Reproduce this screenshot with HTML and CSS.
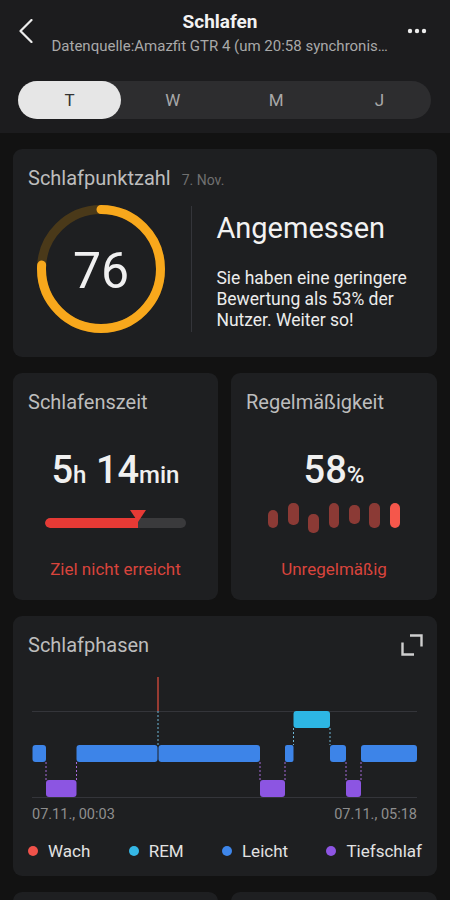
FILE: index.html
```html
<!DOCTYPE html>
<html lang="de">
<head>
    <meta charset="UTF-8">
    <meta name="viewport" content="width=device-width, initial-scale=1.0">
    <title>Schlafen</title>
    <link rel="stylesheet" href="styles.css">
</head>
<body>
    <header class="top">
        <div class="nav">
            <span class="back">
                <svg width="14" height="24" viewBox="0 0 14 24">
                    <polyline points="12.5,1 1.5,12 12.5,23" fill="none" stroke="#ededed" stroke-width="2.2" stroke-linecap="round" stroke-linejoin="round"/>
                </svg>
            </span>
            <div class="titles">
                <h1>Schlafen</h1>
                <p class="source">Datenquelle:Amazfit GTR 4 (um 20:58 synchronisiert)</p>
            </div>
            <span class="more">
                <svg width="20" height="6" viewBox="0 0 20 6">
                    <circle cx="3" cy="3" r="2.2" fill="#ededed"/>
                    <circle cx="10" cy="3" r="2.2" fill="#ededed"/>
                    <circle cx="17" cy="3" r="2.2" fill="#ededed"/>
                </svg>
            </span>
        </div>
        <div class="tabs">
            <span class="tab active">T</span>
            <span class="tab">W</span>
            <span class="tab">M</span>
            <span class="tab">J</span>
        </div>
    </header>

    <main class="content">
        <section class="card score">
            <div class="card-title">Schlafpunktzahl <span class="date">7. Nov.</span></div>
            <div class="score-body">
                <div class="ring">
                    <svg width="128" height="128" viewBox="0 0 128 128">
                        <circle cx="64" cy="64" r="59.5" fill="none" stroke="#4a3919" stroke-width="9"/>
                        <circle cx="64" cy="64" r="59.5" fill="none" stroke="#f8a81c" stroke-width="9"
                            stroke-linecap="round" stroke-dasharray="284 400" transform="rotate(-90 64 64)"/>
                    </svg>
                    <span class="ring-value">76</span>
                </div>
                <div class="divider"></div>
                <div class="score-text">
                    <div class="verdict">Angemessen</div>
                    <p class="desc">Sie haben eine geringere Bewertung als 53% der Nutzer. Weiter so!</p>
                </div>
            </div>
        </section>

        <div class="pair">
            <section class="card small">
                <div class="card-title">Schlafenszeit</div>
                <div class="big-value">5<small>h</small> 14<small>min</small></div>
                <div class="goal">
                    <div class="goal-bar"><div class="goal-fill" style="width: 66%"></div></div>
                    <span class="goal-mark" style="left: 66%"></span>
                </div>
                <div class="status">Ziel nicht erreicht</div>
            </section>
            <section class="card small">
                <div class="card-title">Regelmäßigkeit</div>
                <div class="big-value">58<small>%</small></div>
                <div class="reg-bars">
                    <span class="reg" style="height: 18px; margin-top: 7px"></span>
                    <span class="reg" style="height: 22px; margin-top: 0"></span>
                    <span class="reg" style="height: 19px; margin-top: 11px"></span>
                    <span class="reg" style="height: 25px; margin-top: 0"></span>
                    <span class="reg" style="height: 19px; margin-top: 2px"></span>
                    <span class="reg" style="height: 25px; margin-top: 0"></span>
                    <span class="reg now" style="height: 25px; margin-top: 0"></span>
                </div>
                <div class="status">Unregelmäßig</div>
            </section>
        </div>

        <section class="card phases">
            <div class="card-title row">
                <span>Schlafphasen</span>
                <svg class="expand" width="22" height="22" viewBox="0 0 22 22">
                    <polyline points="9,1.5 20.5,1.5 20.5,12.5" fill="none" stroke="#cfcfcf" stroke-width="2.4"/>
                    <polyline points="1.5,8.5 1.5,20.5 13,20.5" fill="none" stroke="#cfcfcf" stroke-width="2.4"/>
                </svg>
            </div>
            <svg class="chart" width="394" height="128" viewBox="0 0 394 128">
                <line x1="4" y1="39.5" x2="389" y2="39.5" stroke="#34353a" stroke-width="1"/>
                <line x1="4" y1="125.5" x2="389" y2="125.5" stroke="#34353a" stroke-width="1"/>

                <g stroke="#a56ad8" stroke-width="1" stroke-dasharray="2 2">
                    <line x1="18" y1="90" x2="18" y2="108"/>
                    <line x1="48.5" y1="90" x2="48.5" y2="108"/>
                    <line x1="232" y1="90" x2="232" y2="108"/>
                    <line x1="257" y1="90" x2="257" y2="108"/>
                    <line x1="318" y1="90" x2="318" y2="108"/>
                    <line x1="333" y1="90" x2="333" y2="108"/>
                </g>
                <g stroke="#6fb8d8" stroke-width="1" stroke-dasharray="2 2">
                    <line x1="265.5" y1="56" x2="265.5" y2="73"/>
                    <line x1="302" y1="56" x2="302" y2="73"/>
                    <line x1="130" y1="39" x2="130" y2="73"/>
                </g>
                <line x1="130" y1="5" x2="130" y2="39" stroke="#ea4f3f" stroke-width="1.2"/>

                <g fill="#3d84e8">
                    <rect x="4.5" y="73" width="13.5" height="17" rx="3"/>
                    <rect x="48.5" y="73" width="81" height="17" rx="3"/>
                    <rect x="130.5" y="73" width="101.5" height="17" rx="3"/>
                    <rect x="257" y="73" width="8.5" height="17" rx="2"/>
                    <rect x="302" y="73" width="16" height="17" rx="3"/>
                    <rect x="333" y="73" width="56" height="17" rx="3"/>
                </g>
                <g fill="#8c55e2">
                    <rect x="18" y="108" width="30.5" height="17" rx="3"/>
                    <rect x="232" y="108" width="25" height="17" rx="3"/>
                    <rect x="318" y="108" width="15" height="17" rx="3"/>
                </g>
                <rect x="265.5" y="39" width="36.5" height="17" rx="3" fill="#2db6e4"/>
            </svg>
            <div class="axis">
                <span>07.11., 00:03</span>
                <span>07.11., 05:18</span>
            </div>
            <div class="legend">
                <span class="key"><i class="dot wake"></i>Wach</span>
                <span class="key"><i class="dot rem"></i>REM</span>
                <span class="key"><i class="dot light"></i>Leicht</span>
                <span class="key"><i class="dot deep"></i>Tiefschlaf</span>
            </div>
        </section>

        <div class="pair">
            <section class="card stub"></section>
            <section class="card stub"></section>
        </div>
    </main>
</body>
</html>
```

FILE: styles.css
```css
body {
    margin: 0;
    background-color: #121212;
    font-family: Roboto, "Liberation Sans", sans-serif;
    color: #eeeeee;
    width: 450px;
    height: 900px;
    overflow: hidden;
}
.top {
    background-color: #1c1c1e;
    padding-bottom: 14px;
}
.nav {
    display: flex;
    align-items: center;
    height: 62px;
}
.back {
    display: flex;
    width: 14px;
    margin-left: 19px;
    margin-top: -1px;
}
.titles {
    flex: 1;
    text-align: center;
    margin-top: 4px;
    min-width: 0;
}
.titles h1 {
    margin: 0;
    font-size: 19px;
    line-height: 22px;
    font-weight: 700;
    color: #f2f2f2;
}
.source {
    margin: 3px auto 0;
    font-size: 15px;
    line-height: 20px;
    color: #a9a9a9;
    max-width: 337px;
    white-space: nowrap;
    overflow: hidden;
    text-overflow: ellipsis;
}
.more {
    display: flex;
    width: 20px;
    margin-right: 23px;
}
.tabs {
    display: flex;
    margin: 19px 19px 0 18px;
    height: 38px;
    border-radius: 19px;
    background-color: #2d2d2f;
}
.tab {
    flex: 1;
    display: flex;
    align-items: center;
    justify-content: center;
    border-radius: 19px;
    font-size: 17px;
    color: #a8a8a8;
}
.tab.active {
    background-color: #e6e6e6;
    color: #333333;
}
.content {
    padding: 16px 13px 0;
}
.card {
    background-color: #1e1f21;
    border-radius: 9px;
    padding: 18px 15px 0;
}
.card-title {
    font-size: 20px;
    line-height: 22px;
    height: 22px;
    color: #bdbdbd;
}
.card-title.row {
    display: flex;
    justify-content: space-between;
    align-items: center;
}
.date {
    font-size: 14px;
    line-height: 1;
    color: #707070;
    margin-left: 6px;
}
.score {
    padding-bottom: 24px;
}
.score-body {
    display: flex;
    margin-top: 16px;
    height: 128px;
}
.ring {
    display: grid;
    margin-left: 9px;
    width: 128px;
    height: 128px;
}
.ring svg,
.ring-value {
    grid-area: 1 / 1;
}
.ring-value {
    display: flex;
    align-items: center;
    justify-content: center;
    font-size: 50px;
    color: #f0f0f0;
    padding-top: 3px;
}
.divider {
    width: 1px;
    height: 126px;
    margin: 1px 0 0 26px;
    background-color: #34353a;
}
.score-text {
    margin-left: 25px;
    margin-top: 6px;
}
.verdict {
    font-size: 29px;
    line-height: 34px;
    color: #f2f2f2;
}
.desc {
    margin: 23px 0 0;
    font-size: 17.5px;
    line-height: 21px;
    color: #ececec;
}
.pair {
    display: grid;
    grid-template-columns: 205px 206px;
    gap: 13px;
    margin-top: 16px;
}
.small {
    padding-bottom: 20px;
    text-align: center;
}
.small .card-title {
    text-align: left;
}
.big-value {
    margin-top: 35px;
    font-size: 38px;
    line-height: 44px;
    height: 44px;
    font-weight: 500;
    color: #f0f0f0;
}
.big-value small {
    font-size: 24px;
    line-height: 1;
    font-weight: 500;
}
.goal {
    position: relative;
    width: 141px;
    margin: 18px auto 0;
    padding-top: 8px;
}
.goal-bar {
    height: 10px;
    border-radius: 5px;
    background-color: #3a3a3c;
    overflow: hidden;
}
.goal-fill {
    height: 100%;
    background-color: #e53a35;
    border-radius: 5px 0 0 5px;
}
.goal-mark {
    position: absolute;
    top: 0;
    margin-left: -8px;
    width: 0;
    height: 0;
    border-left: 8px solid transparent;
    border-right: 8px solid transparent;
    border-top: 12px solid #e53a35;
}
.status {
    margin-top: 30px;
    font-size: 17px;
    line-height: 22px;
    color: #d9443c;
}
.reg-bars {
    display: flex;
    justify-content: center;
    align-items: flex-start;
    gap: 9.8px;
    height: 30px;
    margin-top: 11px;
}
.reg-bars + .status {
    margin-top: 25px;
}
.reg {
    width: 10.5px;
    border-radius: 5px;
    background-color: #8b3a35;
}
.reg.now {
    background-color: #f5574b;
}
.phases {
    margin-top: 16px;
    padding-bottom: 14px;
}
.expand {
    display: block;
    margin-right: -1px;
}
.chart {
    display: block;
    margin-top: 16px;
}
.axis {
    display: flex;
    justify-content: space-between;
    margin-top: 6px;
    padding: 0 5px 0 4px;
    font-size: 14.5px;
    line-height: 18px;
    color: #8e8e8e;
}
.legend {
    display: flex;
    justify-content: space-between;
    margin-top: 16px;
    font-size: 17px;
    line-height: 22px;
    color: #e2e2e2;
}
.key {
    display: flex;
    align-items: center;
}
.dot {
    width: 10px;
    height: 10px;
    border-radius: 50%;
    margin-right: 10px;
}
.dot.wake {
    background-color: #f0524a;
}
.dot.rem {
    background-color: #35b7e6;
}
.dot.light {
    background-color: #3e86ea;
}
.dot.deep {
    background-color: #8e55e3;
}
.stub {
    height: 200px;
}
```
